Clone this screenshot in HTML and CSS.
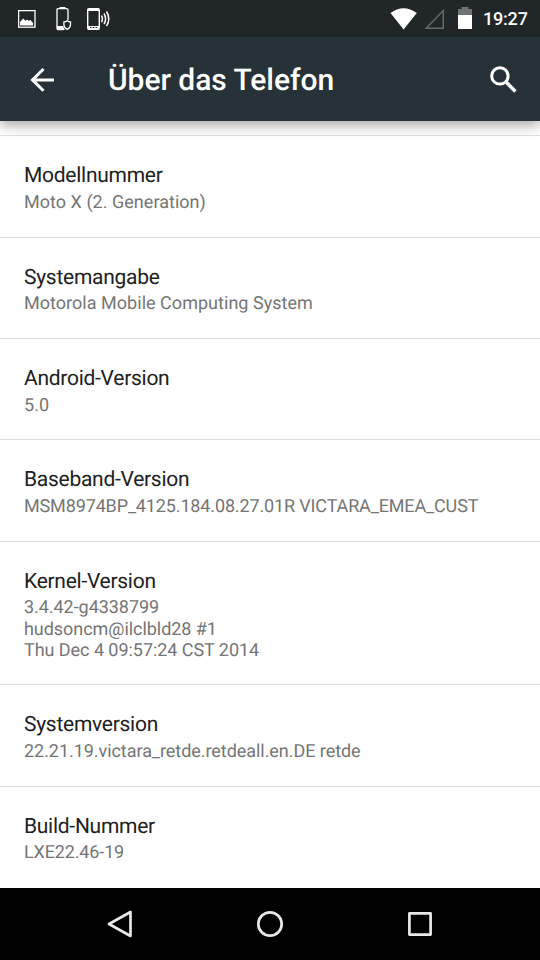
FILE: index.html
```
<!DOCTYPE html>
<html lang="de">
<head>
    <meta charset="UTF-8">
    <meta name="viewport" content="width=device-width, initial-scale=1.0">
    <title>Über das Telefon</title>
    <link rel="stylesheet" href="styles.css">
</head>
<body>
    <div class="status-bar">
        <div class="status-icons">
            <!-- Screenshot -->
            <svg class="icon-picture" width="18" height="18" viewBox="0 0 18 18">
                <rect x="0.6" y="0.6" width="16.4" height="16.6" fill="none" stroke="#fff" stroke-width="1.3"/>
                <path d="M2 15.5V12l3.2-3.5 2.2 2.2 1.6-1.2 1.5 1.3 1.8-.8 2.8 3v2.5z" fill="#fff"/>
            </svg>
            <!-- Device protection -->
            <svg class="icon-shield" width="16" height="24" viewBox="0 0 16 24">
                <path d="M7.5 22.5H2.2Q1 22.5 1 21.3V3Q1 1.7 2.2 1.7h8.6Q12 1.7 12 3v10" fill="none" stroke="#fff" stroke-width="1.3"/>
                <path d="M3.5 0h6v2h-6zM1 19h6l1.8 4H1z" fill="#fff"/>
                <path d="M11.2 13.8q1.7 1.3 3.3 1.2v2.5q0 3.2-3.3 4.8-3.3-1.6-3.3-4.8V15q1.7 0 3.3-1.2z" fill="#212729" stroke="#fff" stroke-width="1.3"/>
            </svg>
            <!-- Ringing phone -->
            <svg class="icon-ring" width="24" height="22" viewBox="0 0 24 22">
                <rect x="0.7" y="0.7" width="11.6" height="20.6" rx="1.2" fill="none" stroke="#fff" stroke-width="1.4"/>
                <path d="M1 1h11v2H1zM1 18h11v3H1z" fill="#fff"/>
                <path d="M3 19.5h1.5m1.2 0h1.6m1.2 0H10" stroke="#212729"/>
                <path d="M14.5 7.5q1.8 3.3 0 6.6M17 5.5q3.2 5.3 0 10.6M19.5 3.5q4.6 7.3 0 14.6" fill="none" stroke="#fff" stroke-width="1.5"/>
            </svg>
        </div>
        <div class="status-system">
            <svg class="icon-wifi" width="28" height="22" viewBox="0 0 28 22">
                <path d="M0.5 5Q13.5-4.5 26.8 5L13.6 21.5z" fill="#fff"/>
            </svg>
            <svg class="icon-signal" width="21" height="22" viewBox="0 0 21 22">
                <path d="M19.3 2.5v17.8H2.2z" fill="none" stroke="#646869" stroke-width="1.5"/>
            </svg>
            <svg class="icon-battery" width="14" height="22" viewBox="0 0 14 22">
                <path d="M0 2h3.5V0h7v2H14v6H0z" fill="#6f7374"/>
                <path d="M0 8h14v14H0z" fill="#fff"/>
            </svg>
            <span class="clock">19:27</span>
        </div>
    </div>

    <header class="toolbar">
        <svg class="icon-back" width="25" height="24" viewBox="0 0 25 24">
            <path d="M24 11.9H2.5M13.5 1L2.5 11.9l11 10.9" fill="none" stroke="#fff" stroke-width="3"/>
        </svg>
        <h1>Über das Telefon</h1>
        <svg class="icon-search" width="27" height="27" viewBox="0 0 27 27">
            <circle cx="9.9" cy="9.9" r="8.2" fill="none" stroke="#fff" stroke-width="3"/>
            <path d="M15.8 15.8l9.6 9.6" stroke="#fff" stroke-width="3.5"/>
        </svg>
    </header>

    <main class="settings">
        <section class="item">
            <h2>Modellnummer</h2>
            <p>Moto X (2. Generation)</p>
        </section>
        <section class="item">
            <h2>Systemangabe</h2>
            <p>Motorola Mobile Computing System</p>
        </section>
        <section class="item">
            <h2>Android-Version</h2>
            <p>5.0</p>
        </section>
        <section class="item">
            <h2>Baseband-Version</h2>
            <p class="baseband">MSM8974BP_4125.184.08.27.01R VICTARA_EMEA_CUST</p>
        </section>
        <section class="item">
            <h2>Kernel-Version</h2>
            <p class="build">3.4.42-g4338799<br>hudsoncm@ilclbld28 #1<br>Thu Dec 4 09:57:24 CST 2014</p>
        </section>
        <section class="item">
            <h2>Systemversion</h2>
            <p class="build">22.21.19.victara_retde.retdeall.en.DE retde</p>
        </section>
        <section class="item">
            <h2>Build-Nummer</h2>
            <p class="baseband">LXE22.46-19</p>
        </section>
    </main>

    <nav class="nav-bar">
        <svg width="30" height="30" viewBox="0 0 30 30">
            <path d="M25.5 3v24L4 15z" fill="none" stroke="#e8e8e8" stroke-width="2.7" stroke-linejoin="round"/>
        </svg>
        <svg width="30" height="30" viewBox="0 0 30 30">
            <circle cx="15" cy="15" r="11.7" fill="none" stroke="#e8e8e8" stroke-width="2.7"/>
        </svg>
        <svg width="30" height="30" viewBox="0 0 30 30">
            <rect x="4.4" y="4.4" width="21.2" height="21.2" fill="none" stroke="#e8e8e8" stroke-width="2.7" stroke-linejoin="round"/>
        </svg>
    </nav>
</body>
</html>
```
FILE: styles.css
```
* {
    margin: 0;
    padding: 0;
    box-sizing: border-box;
}

body {
    width: 540px;
    height: 960px;
    display: flex;
    flex-direction: column;
    overflow: hidden;
    font-family: Roboto, sans-serif;
    text-rendering: geometricPrecision;
    background: #fff;
}

svg {
    display: block;
    flex-shrink: 0;
}

.status-bar {
    height: 37px;
    flex-shrink: 0;
    display: flex;
    justify-content: space-between;
    padding: 0 12px 0 18px;
    background: #212729;
    color: #fff;
}

.status-icons,
.status-system {
    display: flex;
    align-items: flex-start;
}

.icon-picture {
    margin-top: 10px;
}

.icon-shield {
    margin: 7px 0 0 20px;
}

.icon-ring {
    margin: 8px 0 0 15px;
}

.icon-wifi {
    margin-top: 8px;
}

.icon-signal {
    margin: 8px 0 0 6px;
}

.icon-battery {
    margin: 7px 0 0 13px;
}

.clock {
    width: 45px;
    margin-left: 11px;
    font-size: 18px;
    font-weight: 500;
    line-height: 39px;
    letter-spacing: -0.2px;
}

.toolbar {
    height: 84px;
    flex-shrink: 0;
    display: flex;
    align-items: center;
    padding: 1px 23px 0 30px;
    background: #263238;
    color: #fff;
    box-shadow: 0 4px 12px rgba(0, 0, 0, 0.35);
    z-index: 1;
}

.toolbar h1 {
    flex: 1;
    margin-left: 53px;
    padding-top: 2px;
    font-size: 30px;
    font-weight: 500;
    line-height: 36px;
    letter-spacing: -0.05px;
}

.settings {
    flex: 1;
    min-height: 0;
    padding-top: 14.4px;
}

.item {
    padding: 27.8px 24px 23.7px;
    border-top: 1px solid #dedede;
}

.item h2 {
    margin-bottom: 3.2px;
    font-size: 21px;
    font-weight: 400;
    line-height: 24.6px;
    letter-spacing: -0.27px;
    color: #212121;
}

.item p {
    font-size: 18px;
    line-height: 21.1px;
    letter-spacing: 0.03px;
    color: #757575;
}

.item .baseband {
    letter-spacing: -0.14px;
}

.item .build {
    letter-spacing: -0.05px;
}

.nav-bar {
    height: 72px;
    flex-shrink: 0;
    display: flex;
    justify-content: center;
    align-items: center;
    gap: 120px;
    background: #000;
}
```
